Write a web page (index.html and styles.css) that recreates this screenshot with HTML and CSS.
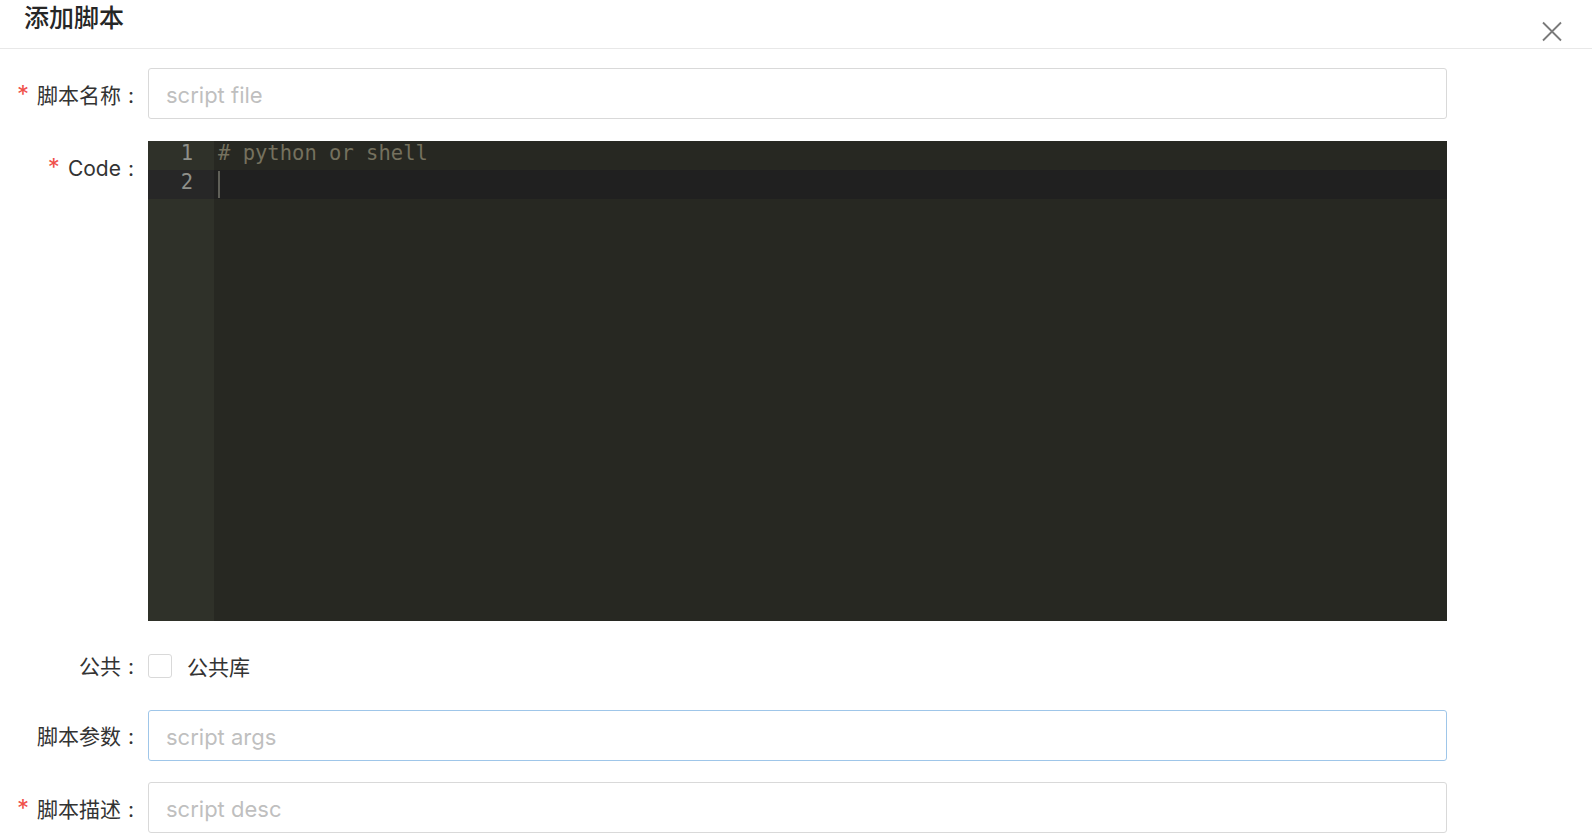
FILE: index.html
```html
<!DOCTYPE html>
<html>

<head>
    <title>添加脚本</title>
    <link rel="stylesheet" href="styles.css">
</head>

<body>
    <div class="modal">
        <div class="modal-header">
            <div class="modal-title">添加脚本</div>
            <button class="close-btn" aria-label="close">
                <svg width="20" height="21" viewBox="0 0 20 21">
                    <path d="M1 1.5 L19 19.5 M19 1.5 L1 19.5" stroke="#7a7a7a" stroke-width="1.8" fill="none" />
                </svg>
            </button>
        </div>

        <form class="form">
            <div class="form-row">
                <label class="form-label"><span class="required">*</span>脚本名称<span class="colon">:</span></label>
                <div class="form-control">
                    <input class="text-input" type="text" placeholder="script file">
                </div>
            </div>

            <div class="form-row">
                <label class="form-label"><span class="required">*</span>Code<span class="colon">:</span></label>
                <div class="form-control">
                    <div class="editor">
                        <div class="ed-row">
                            <div class="ed-num">1</div>
                            <div class="ed-code comment"># python or shell</div>
                        </div>
                        <div class="ed-row active">
                            <div class="ed-num">2</div>
                            <div class="ed-code"><span class="cursor"></span></div>
                        </div>
                        <div class="ed-row fill">
                            <div class="ed-num"></div>
                            <div class="ed-code"></div>
                        </div>
                    </div>
                </div>
            </div>

            <div class="form-row check-row">
                <label class="form-label">公共<span class="colon">:</span></label>
                <div class="form-control">
                    <label class="checkbox">
                        <span class="checkbox-box"></span>
                        <span class="checkbox-text">公共库</span>
                    </label>
                </div>
            </div>

            <div class="form-row">
                <label class="form-label">脚本参数<span class="colon">:</span></label>
                <div class="form-control">
                    <input class="text-input focused" type="text" placeholder="script args">
                </div>
            </div>

            <div class="form-row">
                <label class="form-label"><span class="required">*</span>脚本描述<span class="colon">:</span></label>
                <div class="form-control">
                    <input class="text-input" type="text" placeholder="script desc">
                </div>
            </div>
        </form>
    </div>
</body>

</html>
```

FILE: styles.css
```css
body {
    margin: 0;
    background-color: #ffffff;
    font-family: Inter, "Noto Sans CJK SC", sans-serif;
    color: #333333;
}

.modal {
    width: 1592px;
}

.modal-header {
    display: flex;
    justify-content: space-between;
    align-items: flex-start;
    height: 48px;
    border-bottom: 1px solid #e8e8e8;
}

.modal-title {
    padding-left: 24px;
    font-size: 25px;
    line-height: 36px;
    font-weight: 500;
    color: #262626;
}

.close-btn {
    margin-top: 21px;
    margin-right: 30px;
    width: 20px;
    height: 21px;
    padding: 0;
    border: none;
    background: none;
    cursor: pointer;
}

.close-btn svg {
    display: block;
}

.form {
    padding-top: 19px;
}

.form-row {
    display: flex;
    margin-bottom: 21px;
}

.form-label {
    width: 148px;
    box-sizing: border-box;
    padding-top: 2px;
    padding-right: 14px;
    text-align: right;
    font-size: 21px;
    line-height: 49px;
    color: #333333;
    white-space: nowrap;
}

.colon {
    margin-left: 7px;
}

.required {
    color: #f0504a;
    font-size: 24px;
    margin-right: 8px;
}

.form-control {
    width: 1299px;
}

.text-input {
    display: block;
    width: 100%;
    height: 51px;
    box-sizing: border-box;
    padding: 3px 17px 0;
    border: 1px solid #d9d9d9;
    border-radius: 3px;
    font-family: Inter, "Noto Sans CJK SC", sans-serif;
    font-size: 22px;
    color: #333333;
    outline: none;
}

.text-input::placeholder {
    color: #bfbfbf;
}

.text-input.focused {
    border-color: #9fc6e9;
}

/* code editor (monokai) */
.editor {
    display: flex;
    flex-direction: column;
    height: 480px;
    background-color: #272822;
    font-family: "DejaVu Sans Mono", "Liberation Mono", monospace;
    font-size: 20.5px;
}

.ed-row {
    display: flex;
    height: 29px;
    line-height: 25px;
}

.ed-num {
    width: 66px;
    box-sizing: border-box;
    padding-right: 21px;
    text-align: right;
    background-color: #2f3129;
    color: #8f908a;
}

.ed-code {
    flex: 1;
    padding-left: 4px;
    white-space: pre;
}

.comment {
    color: #75715e;
}

.ed-row.active .ed-num {
    background-color: #272727;
}

.ed-row.active .ed-code {
    background-color: #202020;
}

.ed-row.fill {
    flex: 1;
}

.cursor {
    display: inline-block;
    width: 2px;
    height: 27px;
    margin-top: 1px;
    vertical-align: top;
    background-color: #5f5f58;
}

.check-row .form-label {
    line-height: 45px;
}

.checkbox {
    display: flex;
    align-items: center;
    height: 47px;
    cursor: pointer;
}

.checkbox-box {
    width: 24px;
    height: 24px;
    box-sizing: border-box;
    border: 1px solid #d9d9d9;
    border-radius: 3px;
    background-color: #ffffff;
}

.checkbox-text {
    margin-left: 15px;
    font-size: 21px;
    color: #333333;
}
```
